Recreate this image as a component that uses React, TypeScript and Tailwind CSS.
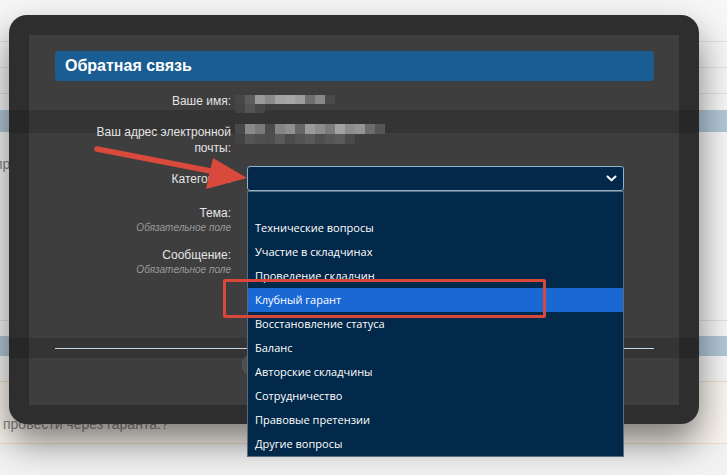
import React from "react";

const nameRow1 = ["#474747", "#5c5c5c", "#9a9a9a", "#8a8a8a", "#a3a3a3", "#a6a6a6", "#9d9d9d", "#6e6e6e", "#888888", "#4a4a4a"];
const nameRow2 = ["#444444", "#555555", "#474747"];
const mailRow1 = ["#484848", "#8a8a8a", "#7a7a7a", "#4c4c4c", "#858585", "#8f8f8f", "#666666", "#9a9a9a", "#8c8c8c", "#7b7b7b", "#a2a2a2", "#8d8d8d", "#959595", "#6c6c6c", "#565656"];
const mailRow2 = ["#434343", "#555555", "#505050", "#4d4d4d", "#5a5a5a", "#4b4b4b", "#535353", "#5a5a5a", "#4e4e4e", "#565656", "#5a5a5a", "#4a4a4a"];

const options = [
  "",
  "Технические вопросы",
  "Участие в складчинах",
  "Проведение складчин",
  "Клубный гарант",
  "Восстановление статуса",
  "Баланс",
  "Авторские складчины",
  "Сотрудничество",
  "Правовые претензии",
  "Другие вопросы",
];

function Pixels({ rows, cell }: { rows: string[][]; cell: number }) {
  return (
    <div className="flex flex-col blur-[0.6px]">
      {rows.map((r, i) => (
        <div key={i} className="flex">
          {r.map((c, j) => (
            <div key={j} style={{ background: c, width: 10, height: cell }} />
          ))}
        </div>
      ))}
    </div>
  );
}

export default function App() {
  const sans = { fontFamily: '"Liberation Sans", Arial, sans-serif' };
  return (
    <div className="relative w-[727px] h-[475px] overflow-hidden bg-[#f3f3f3]" style={sans}>
      {/* background page */}
      <div className="flex flex-col">
        <div className="h-[42px] bg-[#f7f7f7] border-b border-[#dbe2e8]" />
        <div className="h-[26px] bg-[#f7f7f7] border-b border-[#dbe2e8]" />
        <div className="h-[26px] bg-[#f7f7f7] border-b border-[#dbe2e8]" />
        <div className="h-[16px] bg-[#f7f7f7]" />
        <div className="h-[22px] bg-[#b3c9d8]" />
        <div className="h-[64px] bg-[#f7f7f7] flex items-center">
          <span className="-ml-[5px] text-[14px] text-[#858585]">провести через гаранта.?</span>
        </div>
        <div className="h-[125px] bg-[#f7f7f7] border-b border-[#dbe2e8]" />
        <div className="h-[15px] bg-[#f7f7f7]" />
        <div className="h-[20px] bg-[#b3c9d8]" />
        <div className="h-[26px] bg-[#f7f7f7] border-b border-[#f0dcc4]" />
        <div className="h-[62px] bg-[#faf5ee] border-b border-[#f0dcc4] flex items-end pb-[8px]">
          <span className="ml-[3px] text-[14px] text-[#8a8a8a]">провести через гаранта.?</span>
        </div>
      </div>

      {/* modal */}
      <div className="absolute z-10 left-[9px] top-[15px] w-[690px] h-[409px] rounded-[18px] bg-[#2e2e2e] p-[20px] pb-[19px] shadow-[0_18px_36px_rgba(0,0,0,0.5)]">
        <div className="relative h-[370px] bg-[#3e3e3e] pt-[16px] pl-[26px] pr-[25px]">
          {/* faint see-through bands */}
          <div className="pointer-events-none absolute -left-[20px] -right-[20px] top-[75px] h-[23px] bg-black/15" />
          <div className="pointer-events-none absolute -left-[20px] -right-[20px] top-[303px] h-[20px] bg-black/15" />

          <div className="relative h-[30px] rounded-[4px] bg-[#1a5d92] flex items-center pl-[10px]">
            <span className="text-white text-[16px] font-bold">Обратная связь</span>
          </div>

          {/* name */}
          <div className="relative mt-[12px] flex h-[20px]">
            <div className="w-[176px] text-right text-[12px] leading-[16px] text-[#e4e4e4]">Ваше имя:</div>
            <div className="ml-[4px] mt-[2px]">
              <Pixels rows={[nameRow1, nameRow2]} cell={9} />
            </div>
          </div>

          {/* email */}
          <div className="relative mt-[11px] flex h-[32px]">
            <div className="w-[176px] text-right text-[12px] leading-[16px] text-[#e4e4e4]">
              Ваш адрес электронной
              <br />
              почты:
            </div>
            <div className="ml-[4px]">
              <Pixels rows={[mailRow1, mailRow2]} cell={10} />
            </div>
          </div>

          {/* category */}
          <div className="relative z-10 mt-[10px] flex h-[25px] items-center">
            <div className="w-[176px] text-right text-[12px] leading-[16px] text-[#e4e4e4]">Категория:</div>
            <div className="relative ml-[16px] w-[377px] h-[25px]">
              <div className="h-full rounded-[3px] border border-[#8fb2cf] bg-[#03284a] flex items-center justify-end pr-[6px]">
                <svg width="11" height="7" viewBox="0 0 11 7">
                  <path d="M1.5 1.5 L5.5 5.2 L9.5 1.5" fill="none" stroke="#ffffff" strokeWidth="2" strokeLinecap="round" strokeLinejoin="round" />
                </svg>
              </div>
              <div
                className="absolute left-0 top-full w-[377px] border border-[#5b6b7a] bg-[#03294a] flex flex-col"
                style={{ fontFamily: '"Open Sans", "Noto Sans", sans-serif' }}
              >
                {options.map((o, i) => (
                  <div
                    key={i}
                    className={
                      "h-[24px] flex items-center pl-[7px] text-[11px] text-white " +
                      (i === 4 ? "bg-[#1a68d4]" : "")
                    }
                  >
                    {o}
                  </div>
                ))}
              </div>
            </div>
          </div>

          {/* subject */}
          <div className="relative mt-[14px] flex h-[30px]">
            <div className="w-[176px] text-right flex flex-col">
              <span className="text-[12px] leading-[16px] text-[#e4e4e4]">Тема:</span>
              <span className="text-[10px] leading-[13px] italic text-[#9a9a9a]">Обязательное поле</span>
            </div>
          </div>

          {/* message */}
          <div className="relative mt-[12px] flex h-[30px]">
            <div className="w-[176px] text-right flex flex-col">
              <span className="text-[12px] leading-[16px] text-[#e4e4e4]">Сообщение:</span>
              <span className="text-[10px] leading-[13px] italic text-[#9a9a9a]">Обязательное поле</span>
            </div>
          </div>

          <div className="relative mt-[71px] h-px bg-[#c7d7e6]" />
          <div className="relative mt-[4px] flex h-[24px]">
            <div className="ml-[187px] w-[200px] h-[24px] rounded-full bg-[#4d4d4d] border border-[#5a5a5a]" />
          </div>
        </div>
      </div>

      {/* red highlight box */}
      <div className="absolute z-30 left-[223px] top-[279px] w-[323px] h-[39px] rounded-[2px] border-[3px] border-[#d9483b]" />

      {/* red arrow */}
      <svg className="absolute z-30 left-0 top-0 pointer-events-none" width="727" height="475" viewBox="0 0 727 475">
        <line x1="97" y1="149" x2="216" y2="172" stroke="#d9493c" strokeWidth="5.5" strokeLinecap="round" />
        <polygon points="247,178 213,158 206,189" fill="#d9493c" />
      </svg>
    </div>
  );
}
